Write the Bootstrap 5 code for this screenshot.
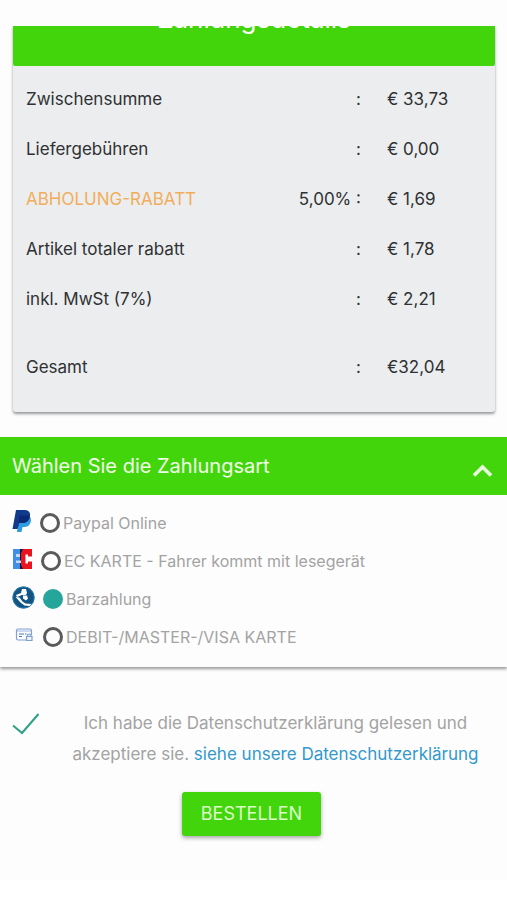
<!DOCTYPE html>
<html lang="de">
<head>
<meta charset="utf-8">
<meta name="viewport" content="width=device-width, initial-scale=1">
<title>Zahlungsdetails</title>
<link href="https://cdn.jsdelivr.net/npm/bootstrap@5.3.0/dist/css/bootstrap.min.css" rel="stylesheet">
<style>
:root { --shop-green: #43d50b; --shop-teal: #26a69a; }
html { background: #fff; }
body { font-family: Inter, "Liberation Sans", sans-serif; font-size: 17px; line-height: 24px; color: #2f3133; background: #fdfdfd; padding-bottom: 44px; }
.page-top { height: 26px; }
.summary { background: #ebedef; border-radius: 0 0 3px 3px; box-shadow: 0 2px 3px rgba(0,0,0,.4); margin: 0 12px 25px 13px; padding-bottom: 20px; }
.summary-head { height: 40px; background: var(--shop-green); color: #fff; border-radius: 0 0 2px 2px; padding-bottom: 31px; }
.summary-head h1 { font-size: 26px; line-height: 32px; font-weight: 400; }
.sums { width: 100%; margin-top: 8px; }
.sums th, .sums td { font-weight: 400; height: 50px; padding: 0; vertical-align: middle; }
.sums th { padding-left: 13px; }
.sums .sep { text-align: right; padding-right: 26px; }
.sums .amount { width: 108px; }
.sums .total > * { height: 68px; padding-top: 17px; }
.sums .rebate { color: #f2ad5c; }
.pay { box-shadow: 0 2px 3px rgba(0,0,0,.4); background: #fdfdfd; }
.pay-head { background: var(--shop-green); color: #f1ffe9; font-size: 20px; line-height: 24px; height: 58px; padding: 0 14px 0 12px; border: 0; }
.pay-list { padding: 9px 12px 11px; color: #a3a3a3; font-size: 16px; }
.pay-list label { height: 38px; }
.pay-icon { flex: none; margin-bottom: 4px; }
.pay-list input { appearance: none; flex: none; width: 20px; height: 20px; margin: 0 3px 0 8px; border: 3px solid #5a5a5a; border-radius: 50%; background: transparent; }
.pay-list input:checked { border-color: var(--shop-teal); background: var(--shop-teal); }
.consent { padding: 41px 12px 0; line-height: 31px; color: #a3a3a3; }
.consent input { position: absolute; inset: 0; width: 100%; height: 100%; margin: 0; opacity: 0; }
.consent-text { padding: 0 8px 0 24px; }
.consent a { color: #3399cb; }
.tick { width: 28px; height: 31px; flex: none; }
.order { background: var(--shop-green); color: #dcffca; border: 0; border-radius: 3px; padding: 10px 19px; font-size: 18px; line-height: 24px; box-shadow: 0 2px 4px rgba(0,0,0,.35); }
.order-row { margin-top: 22px; padding-right: 4px; }
</style>
<script src="https://cdn.jsdelivr.net/npm/bootstrap@5.3.0/dist/js/bootstrap.bundle.min.js"></script>
</head>
<body>
<div class="page-top"></div>
<main>
  <section class="summary">
    <header class="summary-head d-flex justify-content-center align-items-end overflow-hidden"><h1 class="m-0">Zahlungsdetails</h1></header>
    <table class="sums">
      <tbody>
        <tr><th scope="row">Zwischensumme</th><td class="sep">:</td><td class="amount">€ 33,73</td></tr>
        <tr><th scope="row">Liefergebühren</th><td class="sep">:</td><td class="amount">€ 0,00</td></tr>
        <tr><th scope="row" class="rebate">ABHOLUNG-RABATT</th><td class="sep">5,00% :</td><td class="amount">€ 1,69</td></tr>
        <tr><th scope="row">Artikel totaler rabatt</th><td class="sep">:</td><td class="amount">€ 1,78</td></tr>
        <tr><th scope="row">inkl. MwSt (7%)</th><td class="sep">:</td><td class="amount">€ 2,21</td></tr>
        <tr class="total"><th scope="row">Gesamt</th><td class="sep">:</td><td class="amount">€32,04</td></tr>
      </tbody>
    </table>
  </section>

  <section class="pay">
    <button type="button" class="pay-head w-100 d-flex justify-content-between align-items-center text-start" data-bs-toggle="collapse" data-bs-target="#methods" aria-expanded="true" aria-controls="methods">
      <span>Wählen Sie die Zahlungsart</span>
      <svg class="mt-2" width="21" height="14" viewBox="0 0 21 14" fill="none" stroke="#e8ffdc" stroke-width="3.6" aria-hidden="true"><path d="M2 12.500 10.500 4 19 12.500"/></svg>
    </button>
    <div id="methods" class="collapse show">
      <div class="pay-list d-flex flex-column">
        <label class="d-flex align-items-center" for="m1">
          <svg class="pay-icon" width="20" height="24" viewBox="0 0 20 24" aria-hidden="true"><path fill="#2f9be0" d="M7 7h10q3 2 1.500 6.500Q17 18 12 18h-1.500l-1 5H5z"/><path fill="#123a8c" d="M4 1h9q6 .5 5 6.500Q17 14 10 14H7l-1.500 6H0.500z"/><path fill="#0a2a78" d="M7.500 6.500h8.500q1.800.5 1.700 2Q16 14 10 14H7l-1.500 6z"/></svg>
          <input type="radio" name="method" id="m1">Paypal Online
        </label>
        <label class="d-flex align-items-center" for="m2">
          <svg class="pay-icon" width="21" height="20" viewBox="0 0 21 20" aria-hidden="true"><path fill="#3d8fe8" d="M1 0h8v20H1z"/><path fill="#15132e" d="M8 0h4v20H8z"/><path fill="#e8141f" d="M11 0h9v20h-9l-2-4V4z"/><path fill="#b9dcff" d="M4 5h4v3H4zM4 11.500h5V14H4z"/><path fill="#fff" d="M20 7.500h-4V5.500h-2.500v9H16v-2h4z"/></svg>
          <input type="radio" name="method" id="m2">EC KARTE - Fahrer kommt mit lesegerät
        </label>
        <label class="d-flex align-items-center" for="m3">
          <svg class="pay-icon" width="23" height="23" viewBox="0 0 23 23" aria-hidden="true"><circle cx="11.500" cy="11.500" r="11" fill="#125584"/><circle cx="11.500" cy="11.500" r="10.600" fill="none" stroke="#3188b6" stroke-width=".8"/><path fill="#fff" d="m10 3 4 0 1 4-1 2-4 0-5 2-1-2 5-2z"/><path fill="#fff" d="m3.500 11 4 .5 3 4 3 2 6 .500-2 2-5-.5-4-3z"/><path fill="#fff" d="m11 9.500 4 0 1 3-2 2-3-2z"/></svg>
          <input type="radio" name="method" id="m3" checked>Barzahlung
        </label>
        <label class="d-flex align-items-center" for="m4">
          <svg class="pay-icon" width="23" height="16" viewBox="0 0 23 16" fill="none" stroke="#819fd0" stroke-width="1.200" aria-hidden="true"><path d="M14 13H6q-1.500 0-1.500-1.500v-8Q4.500 2 6 2h12q1.500 0 1.500 1.500V8" /><path stroke="#a9c0e5" d="M5 4h14"/><path stroke="#5579b8" d="M7 7h5M7 9.500h3M13 7h1.500"/><path fill="#edf3fc" d="M14.500 9.500h5.500v4h-5.500zM15.500 9.500V8q1.700-2 3.400 0v1.500"/></svg>
          <input type="radio" name="method" id="m4">DEBIT-/MASTER-/VISA KARTE
        </label>
      </div>
    </div>
  </section>

  <form>
    <div class="consent d-flex align-items-start">
      <span class="tick position-relative">
        <svg class="d-block" width="28" height="31" viewBox="0 0 28 31" fill="none" stroke="#2f9f86" stroke-width="2" aria-hidden="true"><path d="M1 17.500 10 25 26.500 6"/></svg>
        <input type="checkbox" id="agree" checked>
      </span>
      <div class="consent-text flex-grow-1 text-center"><label class="d-inline" for="agree">Ich habe die Datenschutzerklärung gelesen und akzeptiere sie.</label> <a class="text-decoration-none" href="#datenschutz">siehe unsere Datenschutzerklärung</a></div>
    </div>
    <div class="order-row text-center"><button type="submit" class="order">BESTELLEN</button></div>
  </form>
</main>
</body>
</html>
